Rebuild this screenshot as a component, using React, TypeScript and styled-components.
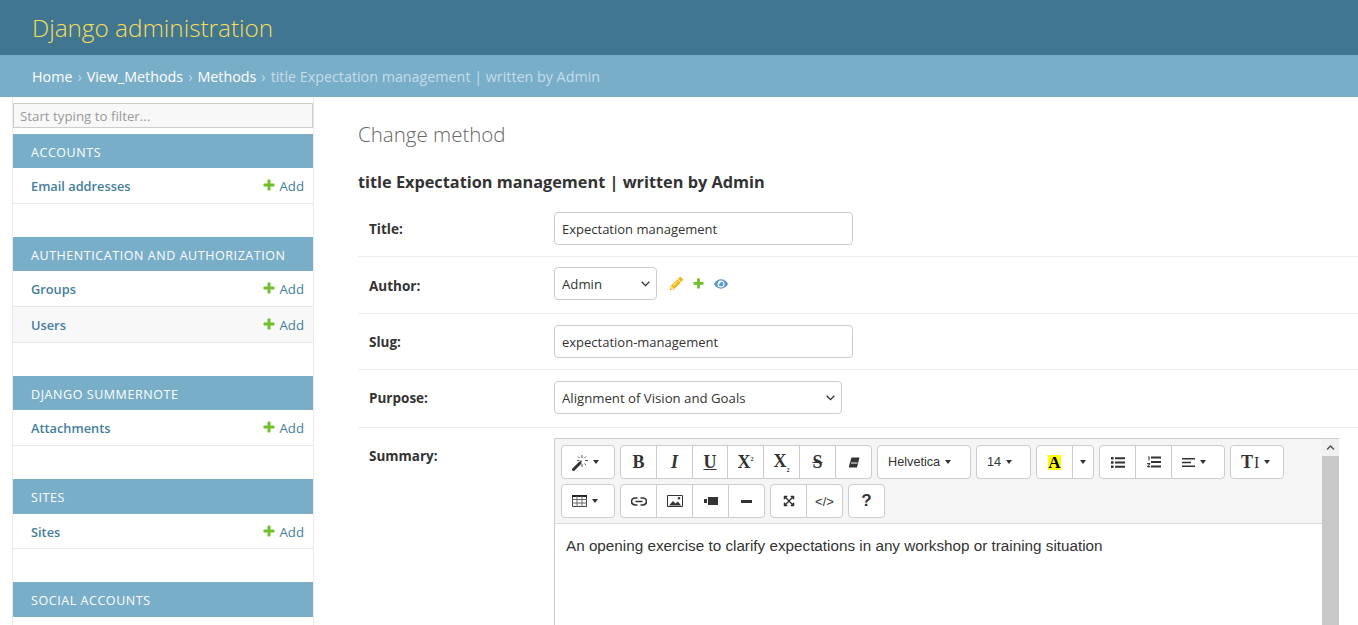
import React from "react";
import styled, { createGlobalStyle } from "styled-components";
import { FaPencilAlt, FaEye, FaChevronUp, FaExpandArrowsAlt } from "react-icons/fa";

const GlobalStyle = createGlobalStyle`
  html, body {
    margin: 0;
    height: 625px;
    overflow: hidden;
    background: #fff;
    font-family: "Open Sans", "Liberation Sans", sans-serif;
    color: #333;
  }
`;

const Header = styled.header`
  height: 55px;
  background: #417690;
  padding-left: 32px;
  display: flex;
  align-items: center;
`;

const Branding = styled.h1`
  margin: 0;
  font-size: 24.3px;
  font-weight: 300;
  color: #f5dd5d;
`;

const Breadcrumbs = styled.div`
  height: 42px;
  background: #79aec8;
  padding-left: 32px;
  display: flex;
  align-items: center;
  font-size: 14.3px;
  color: #c4dce8;
`;

const Crumb = styled.a`
  color: #fff;
`;

const Sep = styled.span`
  margin: 0 5px;
`;

const Body = styled.div`
  display: flex;
  align-items: flex-start;
  height: 528px;
  overflow: hidden;
`;

const Sidebar = styled.nav`
  width: 300px;
  margin-left: 12px;
  height: 528px;
  flex: none;
  border-left: 1px solid #eaeaea;
  border-right: 1px solid #eaeaea;
  padding-top: 6px;
`;

const Filter = styled.input`
  display: block;
  box-sizing: border-box;
  width: 100%;
  height: 25px;
  border: 1px solid #ccc;
  background: #f8f8f8;
  padding: 0 6px;
  font: 13.3px "Open Sans", sans-serif;
  outline: none;
  &::placeholder {
    color: #999;
    opacity: 1;
  }
`;

const Module = styled.section`
  margin-top: 6px;
  margin-bottom: 33px;
`;

const Caption = styled.div<{ $tall?: boolean }>`
  height: ${(p) => (p.$tall ? 35 : 34)}px;
  box-sizing: border-box;
  padding: 2px 0 0 18px;
  background: #79aec8;
  color: #fff;
  font-size: 12.5px;
  letter-spacing: 0.56px;
  display: flex;
  align-items: center;
  text-transform: uppercase;
`;

const ModelRow = styled.div<{ $even?: boolean; $short?: boolean }>`
  height: ${(p) => (p.$short ? 33 : 35)}px;
  padding: ${(p) => (p.$short ? "1px" : "0")} 9px 0 18px;
  border-bottom: 1px solid #e8e8e8;
  background: ${(p) => (p.$even ? "#f8f8f8" : "#fff")};
  display: flex;
  align-items: center;
  justify-content: space-between;
  font-size: 12.8px;
`;

const ModelLink = styled.a`
  color: #447e9b;
  font-weight: 600;
`;

const AddLink = styled.a`
  color: #447e9b;
  font-size: 13.2px;
  display: flex;
  align-items: center;
  gap: 4px;
  svg {
    margin-top: -2px;
  }
`;

const Main = styled.main`
  flex: 1;
  min-width: 0;
  padding: 23px 0 0 44px;
`;

const PageTitle = styled.h1`
  margin: 0;
  font-size: 20.5px;
  font-weight: 300;
  color: #666;
`;

const ObjectTitle = styled.h2`
  margin: 23px 0 0;
  font-size: 16.3px;
  font-weight: 700;
  color: #333;
`;

const FormRow = styled.div<{ $height: number; $top: number }>`
  height: ${(p) => p.$height}px;
  padding-top: ${(p) => p.$top}px;
  box-sizing: border-box;
  border-bottom: 1px solid #eee;
  display: flex;
  align-items: flex-start;
`;

const LastRow = styled.div`
  display: flex;
  align-items: flex-start;
  padding-top: 10px;
`;

const Label = styled.label<{ $line: number }>`
  width: 185px;
  flex: none;
  padding-left: 11px;
  font-size: 13.5px;
  font-weight: 700;
  line-height: ${(p) => p.$line}px;
  color: #333;
`;

const TextInput = styled.input`
  box-sizing: border-box;
  width: 299px;
  height: 33px;
  border: 1px solid #ccc;
  border-radius: 4px;
  padding: 0 7px;
  font: 13px "Open Sans", sans-serif;
  color: #333;
`;

const Select = styled.select<{ $width: number }>`
  box-sizing: border-box;
  appearance: none;
  width: ${(p) => p.$width}px;
  height: 33px;
  border: 1px solid #ccc;
  border-radius: 4px;
  padding: 0 7px;
  background: #fff url("data:image/svg+xml,%3Csvg xmlns='http://www.w3.org/2000/svg' width='9' height='6'%3E%3Cpath d='M.7.8 4.500 4.600 8.300.8' fill='none' stroke='%23333' stroke-width='1.300'/%3E%3C/svg%3E") no-repeat right 6px center;
  font: 13.2px "Open Sans", sans-serif;
  color: #333;
`;

const RelatedIcons = styled.div`
  display: flex;
  align-items: center;
  height: 33px;
  margin-left: 13px;
  gap: 9px;
`;

const Editor = styled.div`
  width: 785px;
  height: 240px;
  box-sizing: border-box;
  border: 1px solid #ccc;
  border-right: none;
  display: flex;
`;

const EditorColumn = styled.div`
  flex: 1;
  min-width: 0;
`;

const Toolbar = styled.div`
  background: #f5f5f5;
  border-bottom: 1px solid #ddd;
  padding: 6px 5px 5px 6px;
  display: flex;
  flex-wrap: wrap;
  gap: 5px;
`;

const Group = styled.div`
  display: flex;
`;

const ToolButton = styled.button<{ $w: number; $dropdown?: boolean }>`
  box-sizing: border-box;
  width: ${(p) => p.$w}px;
  height: 34px;
  margin-left: -1px;
  padding: 0 0 0 ${(p) => (p.$dropdown ? "10px" : "0")};
  background: #fff;
  border: 1px solid #ccc;
  color: #333;
  font: 12.7px "Liberation Sans", sans-serif;
  display: flex;
  align-items: center;
  justify-content: ${(p) => (p.$dropdown ? "flex-start" : "center")};
  gap: ${(p) => (p.$dropdown ? "5px" : "0")};
  &:first-child {
    margin-left: 0;
    border-radius: 4px 0 0 4px;
  }
  &:last-child {
    border-radius: 0 4px 4px 0;
  }
  &:only-child {
    border-radius: 4px;
  }
`;

const Caret = styled.span`
  width: 0;
  height: 0;
  border-left: 3px solid transparent;
  border-right: 3px solid transparent;
  border-top: 4px solid #333;
`;

const SerifGlyph = styled.span<{ $italic?: boolean; $under?: boolean; $strike?: boolean }>`
  font: ${(p) => (p.$italic ? "italic " : "")}700 18px/18px "Liberation Serif", serif;
  text-decoration: ${(p) => (p.$under ? "underline" : p.$strike ? "line-through" : "none")};
  color: #333;
`;

const Script = styled.span<{ $pos: "super" | "sub" }>`
  font: 700 6px "Liberation Serif", serif;
  vertical-align: ${(p) => p.$pos};
`;

const ThinI = styled.span`
  font: 400 16px/18px "Liberation Serif", serif;
  color: #333;
`;

const SizeGlyph = styled.span`
  display: flex;
  align-items: baseline;
  gap: 1px;
`;

const ColorGlyph = styled.span`
  width: 13px;
  height: 15px;
  background: #ff0;
  color: #000;
  font: 700 17px/16px "Liberation Serif", serif;
  text-align: center;
`;

const HelpGlyph = styled.span`
  font: 700 17px "Liberation Sans", sans-serif;
  color: #333;
`;

const CodeGlyph = styled.span`
  font: 13px "Liberation Sans", sans-serif;
  color: #333;
`;

const Content = styled.div`
  padding: 11px 11px;
  font: 15.25px/21px "Liberation Sans", sans-serif;
  color: #333;
`;

const Scrollbar = styled.div`
  width: 17px;
  flex: none;
  background: #c8c8c8;
`;

const ScrollButton = styled.div`
  height: 17px;
  background: #f1f1f1;
  display: flex;
  align-items: center;
  justify-content: center;
  color: #505050;
`;

const Plus = ({ size = 14 }: { size?: number }) => (
  <svg width={size} height={size} viewBox="0 0 1792 1792">
    <path
      fill="#70bf2b"
      d="M1600 796v192q0 40-28 68t-68 28h-416v416q0 40-28 68t-68 28h-192q-40 0-68-28t-28-68v-416h-416q-40 0-68-28t-28-68v-192q0-40 28-68t68-28h416v-416q0-40 28-68t68-28h192q40 0 68 28t28 68v416h416q40 0 68 28t28 68z"
    />
  </svg>
);

const WandIcon = () => (
  <svg width="16" height="17" viewBox="0 0 16 17">
    <path d="M1.500 15.500 8 9" stroke="#333" strokeWidth="3" strokeLinecap="round" />
    <path d="M9 6 10 8 8 8z" fill="#333" />
    <path d="M10 1v3M10 10v3M5 6.500h2.500M13 6.500h3M6 2.500l1.500 1.500M14 2.500 12.500 4M14 11l-1.500-1.500" stroke="#555" strokeWidth="1" />
  </svg>
);

const EraserIcon = () => (
  <svg width="12" height="11" viewBox="0 0 12 11">
    <path d="M3.500 .5H11.500L9 10.500H1L1 9z" fill="#333" />
    <path d="M3 6H9.500" stroke="#fff" strokeWidth="1" />
  </svg>
);

const TableIcon = () => (
  <svg width="15" height="12" viewBox="0 0 15 12">
    <path d="M.5.5h14v11H.5z" fill="none" stroke="#444" />
    <path d="M0 1h15" stroke="#222" strokeWidth="2" />
    <path d="M5 1v11M10 1v11M0 4.500h15M0 8h15" stroke="#666" strokeWidth="1" />
  </svg>
);

const LinkIcon = () => (
  <svg width="16" height="9" viewBox="0 0 16 9">
    <path d="M6.500 1H4a3.500 3.500 0 0 0 0 7h2.500M9.500 1H12a3.500 3.500 0 0 1 0 7H9.500M4.500 4.500h7" fill="none" stroke="#333" strokeWidth="1.700" />
  </svg>
);

const PictureIcon = () => (
  <svg width="16" height="12" viewBox="0 0 16 12">
    <path d="M.5.5h15v11H.5z" fill="none" stroke="#333" />
    <path d="M2 10.500 6 6l2.500 2.500L11 6.500l3 4z" fill="#333" />
    <circle cx="12" cy="3.200" r="1.200" fill="#333" />
  </svg>
);

const VideoIcon = () => (
  <svg width="14" height="8" viewBox="0 0 14 8">
    <path d="M0 2h3v4H0z" fill="#333" />
    <path d="M4 0h10v8H4z" fill="#333" />
  </svg>
);

const MinusIcon = () => (
  <svg width="11" height="3" viewBox="0 0 11 3">
    <path d="M0 0h11v3H0z" fill="#333" />
  </svg>
);

const BulletsIcon = () => (
  <svg width="14" height="11" viewBox="0 0 14 11">
    <path d="M0 0h2.500v2.500H0zM0 4.200h2.500v2.500H0zM0 8.500h2.500V11H0zM4 .2h10v2H4zM4 4.400h10v2H4zM4 8.700h10v2H4z" fill="#333" />
  </svg>
);

const NumbersIcon = () => (
  <svg width="14" height="12" viewBox="0 0 14 12">
    <path d="M1 .5h1.500v4H1.500V1.500H1zM.2 7h3v1.200L1.500 10h1.700v1.200H.2v-1L2 8.200H.2z" fill="#333" />
    <path d="M4 .5h10v2H4zM4 5h10v2H4zM4 9.500h10v2H4z" fill="#333" />
  </svg>
);

const AlignIcon = () => (
  <svg width="13" height="9" viewBox="0 0 13 9">
    <path d="M0 0h13v1.500H0zM0 3.700h9v1.500H0zM0 7.500h13V9H0z" fill="#333" />
  </svg>
);

const modules = [
  { name: "Accounts", rows: ["Email addresses"] },
  { name: "Authentication and Authorization", rows: ["Groups", "Users"] },
  { name: "Django Summernote", rows: ["Attachments"] },
  { name: "Sites", rows: ["Sites"], tall: true },
  { name: "Social Accounts", rows: [], tall: true },
];

export default function App() {
  return (
    <>
      <GlobalStyle />
      <Header>
        <Branding>Django administration</Branding>
      </Header>
      <Breadcrumbs>
        <Crumb>Home</Crumb>
        <Sep>›</Sep>
        <Crumb>View_Methods</Crumb>
        <Sep>›</Sep>
        <Crumb>Methods</Crumb>
        <Sep>›</Sep>
        title Expectation management | written by Admin
      </Breadcrumbs>
      <Body>
        <Sidebar>
          <Filter placeholder="Start typing to filter..." />
          {modules.map((m) => (
            <Module key={m.name}>
              <Caption $tall={m.tall}>{m.name}</Caption>
              {m.rows.map((r, i) => (
                <ModelRow key={r} $even={i === 1} $short={m.tall}>
                  <ModelLink>{r}</ModelLink>
                  <AddLink>
                    <Plus />
                    Add
                  </AddLink>
                </ModelRow>
              ))}
            </Module>
          ))}
        </Sidebar>
        <Main>
          <PageTitle>Change method</PageTitle>
          <ObjectTitle>title Expectation management | written by Admin</ObjectTitle>
          <FormRow $height={64} $top={19}>
            <Label $line={34}>Title:</Label>
            <TextInput defaultValue="Expectation management" />
          </FormRow>
          <FormRow $height={57} $top={10}>
            <Label $line={38}>Author:</Label>
            <Select $width={103} defaultValue="Admin">
              <option>Admin</option>
            </Select>
            <RelatedIcons>
              <FaPencilAlt size={13} color="#efb80b" />
              <Plus size={13} />
              <FaEye size={14} color="#5b97d0" />
            </RelatedIcons>
          </FormRow>
          <FormRow $height={56} $top={11}>
            <Label $line={34}>Slug:</Label>
            <TextInput defaultValue="expectation-management" />
          </FormRow>
          <FormRow $height={58} $top={11}>
            <Label $line={34}>Purpose:</Label>
            <Select $width={288} defaultValue="Alignment of Vision and Goals">
              <option>Alignment of Vision and Goals</option>
            </Select>
          </FormRow>
          <LastRow>
            <Label $line={36}>Summary:</Label>
            <Editor>
              <EditorColumn>
                <Toolbar>
                  <Group>
                    <ToolButton $w={54} $dropdown><WandIcon /><Caret /></ToolButton>
                  </Group>
                  <Group>
                    <ToolButton $w={37}><SerifGlyph>B</SerifGlyph></ToolButton>
                    <ToolButton $w={37}><SerifGlyph $italic>I</SerifGlyph></ToolButton>
                    <ToolButton $w={36}><SerifGlyph $under>U</SerifGlyph></ToolButton>
                    <ToolButton $w={37}><SerifGlyph>X<Script $pos="super">2</Script></SerifGlyph></ToolButton>
                    <ToolButton $w={37}><SerifGlyph>X<Script $pos="sub">2</Script></SerifGlyph></ToolButton>
                    <ToolButton $w={37}><SerifGlyph $strike>S</SerifGlyph></ToolButton>
                    <ToolButton $w={37}><EraserIcon /></ToolButton>
                  </Group>
                  <Group>
                    <ToolButton $w={94} $dropdown>Helvetica <Caret /></ToolButton>
                  </Group>
                  <Group>
                    <ToolButton $w={55} $dropdown>14 <Caret /></ToolButton>
                  </Group>
                  <Group>
                    <ToolButton $w={37}><ColorGlyph>A</ColorGlyph></ToolButton>
                    <ToolButton $w={22}><Caret /></ToolButton>
                  </Group>
                  <Group>
                    <ToolButton $w={37}><BulletsIcon /></ToolButton>
                    <ToolButton $w={37}><NumbersIcon /></ToolButton>
                    <ToolButton $w={54} $dropdown><AlignIcon /><Caret /></ToolButton>
                  </Group>
                  <Group>
                    <ToolButton $w={54} $dropdown>
                      <SizeGlyph><SerifGlyph>T</SerifGlyph><ThinI>I</ThinI></SizeGlyph>
                      <Caret />
                    </ToolButton>
                  </Group>
                  <Group>
                    <ToolButton $w={54} $dropdown><TableIcon /><Caret /></ToolButton>
                  </Group>
                  <Group>
                    <ToolButton $w={37}><LinkIcon /></ToolButton>
                    <ToolButton $w={37}><PictureIcon /></ToolButton>
                    <ToolButton $w={37}><VideoIcon /></ToolButton>
                    <ToolButton $w={37}><MinusIcon /></ToolButton>
                  </Group>
                  <Group>
                    <ToolButton $w={37}><FaExpandArrowsAlt size={12} /></ToolButton>
                    <ToolButton $w={37}><CodeGlyph>&lt;/&gt;</CodeGlyph></ToolButton>
                  </Group>
                  <Group>
                    <ToolButton $w={37}><HelpGlyph>?</HelpGlyph></ToolButton>
                  </Group>
                </Toolbar>
                <Content>An opening exercise to clarify expectations in any workshop or training situation</Content>
              </EditorColumn>
              <Scrollbar>
                <ScrollButton><FaChevronUp size={9} /></ScrollButton>
              </Scrollbar>
            </Editor>
          </LastRow>
        </Main>
      </Body>
    </>
  );
}
